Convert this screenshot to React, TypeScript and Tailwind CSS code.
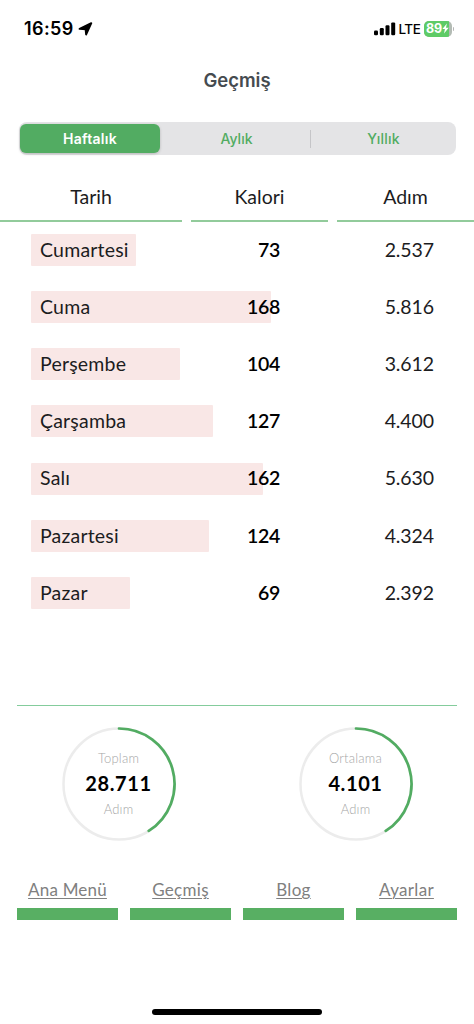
import clsx from "clsx";

interface DayRow {
  day: string;
  calories: number;
  steps: number;
}

const ROWS: DayRow[] = [
  { day: "Cumartesi", calories: 73, steps: 2537 },
  { day: "Cuma", calories: 168, steps: 5816 },
  { day: "Perşembe", calories: 104, steps: 3612 },
  { day: "Çarşamba", calories: 127, steps: 4400 },
  { day: "Salı", calories: 162, steps: 5630 },
  { day: "Pazartesi", calories: 124, steps: 4324 },
  { day: "Pazar", calories: 69, steps: 2392 },
];

const MAX_BAR = 240;
const maxSteps = Math.max(...ROWS.map((r) => r.steps));

const formatSteps = (n: number) =>
  n.toString().replace(/\B(?=(\d{3})+(?!\d))/g, ".");

function StatusBar() {
  return (
    <div className="flex h-14 items-center justify-between pl-6 pr-5 pt-px">
      <div className="flex items-center gap-1 text-black">
        <span className="text-[18px] font-semibold tracking-[0.4px]">16:59</span>
        <svg width="15" height="14" viewBox="0 0 15 14">
          <path
            d="M13.3 1.2 8.1 12.5 7.6 7.3 1.6 6.9Z"
            fill="currentColor"
            stroke="currentColor"
            strokeWidth="1.9"
            strokeLinejoin="round"
          />
        </svg>
      </div>
      <div className="flex items-center text-black">
        <svg width="22" height="14" viewBox="0 0 22 14" fill="currentColor">
          <rect x="0" y="8.5" width="4" height="4.8" rx="1.2" />
          <rect x="5.8" y="6" width="4" height="7.3" rx="1.2" />
          <rect x="11.5" y="3.3" width="4" height="10" rx="1.2" />
          <rect x="17.2" y="0.4" width="4" height="12.9" rx="1.2" />
        </svg>
        <span className="ml-[3px] w-[22px] pt-px text-[13.5px] font-medium tracking-[-0.5px]">LTE</span>
        <div className="relative ml-[3px] flex h-4 w-7 items-center overflow-hidden rounded-[5px] bg-[#b3bbb4]">
          <div className="absolute inset-y-0 left-0 w-[25px] bg-[#5ecb66]" />
          <span className="relative ml-[2.5px] text-[12.5px] font-bold leading-4 tracking-[-0.2px] text-white">
            89
          </span>
          <svg className="relative" width="7" height="11" viewBox="0 0 7 11">
            <path d="M4.9 0.5 0.4 6h2.5L2 10.5 6.7 4.7H4Z" fill="white" />
          </svg>
        </div>
        <div className="ml-px h-1 w-[1.5px] rounded-r bg-[#b5b5b5]" />
      </div>
    </div>
  );
}

function PeriodTabs() {
  return (
    <div className="ml-[19px] mr-[18px] flex h-[33px] items-center rounded-lg bg-[#e4e4e6] py-0.5 pl-px text-[14px]">
      <button
        type="button"
        className="h-[29px] w-[140px] rounded-md bg-[#52ac62] font-semibold tracking-[0.3px] text-white shadow-[0_1px_3px_rgba(0,0,0,0.2)]"
      >
        Haftalık
      </button>
      <button type="button" className="h-full flex-1 pl-[3px] font-medium text-[#52ac62]">
        Aylık
      </button>
      <div className="h-[18px] w-px bg-[#c5c5c8]" />
      <button type="button" className="h-full w-[145px] font-medium tracking-[0.2px] text-[#52ac62]">
        Yıllık
      </button>
    </div>
  );
}

function HistoryTable() {
  return (
    <div className="font-[Lato,sans-serif] text-[19.5px] text-[#1c1c1e]">
      <div className="grid h-[47px] grid-cols-[182px_137px_137px] gap-[9px]">
        <div className="flex items-center justify-center border-b-2 border-[#92cb9b] pb-px">Tarih</div>
        <div className="flex items-center justify-center border-b-2 border-[#92cb9b] pb-px">Kalori</div>
        <div className="flex items-center justify-center border-b-2 border-[#92cb9b] pb-px">Adım</div>
      </div>
      <div className="-mt-[0.6px]">
        {ROWS.map((row) => (
          <div key={row.day} className="relative flex h-[57.15px] items-center pl-10">
            <div
              className="absolute left-[31px] h-8 rounded-[1px] bg-[#f9e7e6]"
              style={{ width: (row.steps / maxSteps) * MAX_BAR }}
            />
            <span className="relative w-40 pb-px tracking-[0.2px]">{row.day}</span>
            <span className="relative w-20 pb-px text-right font-semibold tracking-[-0.3px] text-black">
              {row.calories}
            </span>
            <span className="w-[154px] pb-px text-right tracking-[-0.1px]">
              {formatSteps(row.steps)}
            </span>
          </div>
        ))}
      </div>
    </div>
  );
}

function StepRing({ label, value }: { label: string; value: number }) {
  return (
    <div className="relative flex h-[116px] w-[116px] flex-col items-center justify-center font-[Lato,sans-serif]">
      <svg className="absolute inset-0" viewBox="0 0 116 116" fill="none">
        <circle cx="58" cy="58" r="55.5" stroke="#ececec" strokeWidth="2.5" />
        <path d="M58 2.5a55.5 55.5 0 0 1 29.7 102.4" stroke="#52ac62" strokeWidth="2.7" strokeLinecap="round" />
      </svg>
      <span className="text-[13px] font-light leading-[26px] tracking-[0.2px] text-[#a6a6a6]">{label}</span>
      <span className="-mt-px text-[20px] font-bold leading-[26px] tracking-[0.6px] text-black">
        {formatSteps(value)}
      </span>
      <span className="text-[13px] font-light leading-[26px] tracking-[0.2px] text-[#a6a6a6]">Adım</span>
    </div>
  );
}

const NAV = ["Ana Menü", "Geçmiş", "Blog", "Ayarlar"];

export default function App() {
  return (
    <div className="flex h-[1024px] w-[474px] flex-col overflow-hidden bg-white font-[Inter,sans-serif]">
      <StatusBar />
      <h1 className="mb-[18px] flex h-12 items-center justify-center pt-0.5 text-[18.5px] font-semibold text-[#454b50]">
        Geçmiş
      </h1>
      <PeriodTabs />
      <div className="h-5" />
      <HistoryTable />
      <div className="mx-[17px] mt-[83.5px] h-px shrink-0 bg-[#84cc9c]" />
      <div className="mt-5 flex justify-between pl-[60.5px] pr-[60.5px]">
        <StepRing label="Toplam" value={28711} />
        <StepRing label="Ortalama" value={4101} />
      </div>
      <nav className="mt-9 grid grid-cols-4 gap-3 px-[17px] font-[Lato,sans-serif] text-[17px] text-[#808080]">
        {NAV.map((item) => (
          <a key={item} href="#" className="flex flex-col items-center">
            <span
              className={clsx(
                "h-[30px] leading-6 underline decoration-1 underline-offset-2",
                item === "Ana Menü" ? "tracking-[0.2px]" : "tracking-[0.3px]"
              )}
            >
              {item}
            </span>
            <span className="h-3 w-full bg-[#58af63]" />
          </a>
        ))}
      </nav>
      <div className="mx-auto mb-[9px] mt-auto h-1.5 w-[170px] rounded-full bg-black" />
    </div>
  );
}
